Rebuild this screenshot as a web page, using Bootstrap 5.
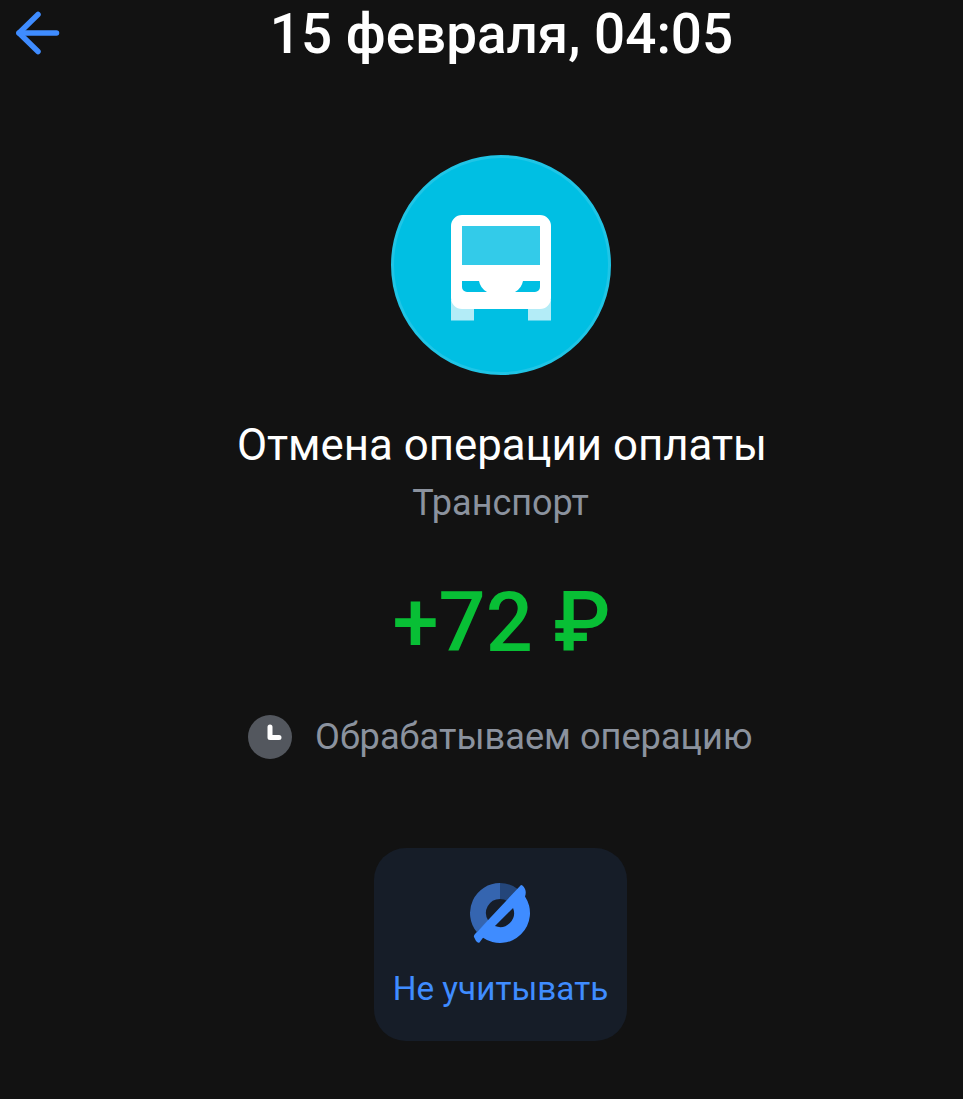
<!DOCTYPE html>
<html lang="ru">
<head>
    <meta charset="UTF-8">
    <meta name="viewport" content="width=device-width, initial-scale=1.0">
    <title>Операция</title>
    <link href="https://cdn.jsdelivr.net/npm/bootstrap@5.3.0/dist/css/bootstrap.min.css" rel="stylesheet">
    <style>
        html, body { height: 100%; }
        body { background: #121212; color: #fff; font-family: Roboto, "Liberation Sans", sans-serif; overflow: hidden; }
        .top-bar { display: grid; grid-template-columns: 62px 1fr 22px; height: 68px; align-items: center; }
        .top-title { font-size: 54.8px; font-weight: 500; line-height: 68px; margin: 0; }
        .back-arrow { display: block; margin-left: 16px; margin-top: -2px; }
        .op-body { padding-left: 38px; }
        .cat-circle { width: 220px; height: 220px; border-radius: 50%; background: #00bfe3; border: 3px solid #1fc5e6; margin-top: 87px; }
        .cat-bus { margin-top: 6px; }
        .op-name { font-size: 43.8px; line-height: 52px; margin-top: 44px; padding-left: 3px; }
        .op-cat { font-size: 36px; line-height: 44px; color: #8b929e; margin-top: 10px; }
        .op-sum { font-size: 83px; font-weight: 500; line-height: 100px; color: #08bf35; margin-top: 48px; padding-left: 2px; }
        .op-status { font-size: 36.2px; line-height: 44px; color: #8b929e; margin-top: 42px; gap: 22.5px; }
        .clock-dot { width: 44px; height: 44px; flex: none; }
        .skip-btn { width: 253px; height: 193px; border-radius: 32px; background: #161d28; margin-top: 89px; padding-top: 35px; color: #3f8cff; }
        .skip-icon { margin-left: -2px; }
        .skip-text { font-size: 33.3px; line-height: 40px; margin-top: 22px; }
    </style>
</head>
<body>

<header class="top-bar">
    <svg class="back-arrow" width="46" height="46" viewBox="0 0 46 46" fill="none" stroke="#3f8cff" stroke-width="5.500" stroke-linecap="round" stroke-linejoin="round">
        <path d="M3 23H40.500"/>
        <path d="M22 4.500L3 23L22 41.500"/>
    </svg>
    <h1 class="top-title text-center">15 февраля, 04:05</h1>
    <span></span>
</header>

<main class="op-body d-flex flex-column align-items-center">
    <div class="cat-circle d-flex align-items-center justify-content-center">
        <svg class="cat-bus" width="100" height="106" viewBox="0 0 100 106">
            <path d="M0 85H23V105.500H0ZM77 85H100V105.500H77Z" fill="#fff" fill-opacity=".7"/>
            <path fill="#fff" fill-rule="evenodd" d="M11 0H89A11 11 0 0 1 100 11V83A11 11 0 0 1 89 94H11A11 11 0 0 1 0 83V11A11 11 0 0 1 11 0ZM11 66V72A5 5 0 0 0 16 77H36A16 16 0 0 1 28 66ZM72 66A16 16 0 0 1 64 77H84A5 5 0 0 0 89 72V66Z"/>
            <rect x="11" y="11" width="78" height="39" fill="#33cbe9"/>
        </svg>
    </div>
    <div class="op-name">Отмена операции оплаты</div>
    <div class="op-cat">Транспорт</div>
    <div class="op-sum">+72 ₽</div>
    <div class="op-status d-flex align-items-center">
        <svg class="clock-dot" viewBox="0 0 44 44">
            <circle cx="22" cy="22" r="22" fill="#53575e"/>
            <path d="M22 12V22.500H31" fill="none" stroke="#fff" stroke-width="5" stroke-linecap="round" stroke-linejoin="round"/>
        </svg>
        <span>Обрабатываем операцию</span>
    </div>
    <div class="skip-btn d-flex flex-column align-items-center">
        <svg class="skip-icon" width="64" height="64" viewBox="0 0 64 64">
            <path fill="#3565b0" d="M32 0A30 30 0 0 0 8.800 49L20.300 37.700A14 14 0 0 1 32 16Z"/>
            <path fill="#24467a" d="M32 0A30 30 0 0 1 51.100 6.900L39.700 18.300A14 14 0 0 0 32 16Z"/>
            <path fill="#3f8cff" fill-rule="evenodd" d="M53 2Q55 2 57 6Q58.500 9.500 57 13.400A30 30 0 0 1 15 54.700L11.500 59.500Q10 60.500 8 58L6 54Q5.500 52.500 7 51ZM45.050 24.950L26.950 43.050A14 14 0 0 0 45.050 24.950Z"/>
        </svg>
        <div class="skip-text">Не учитывать</div>
    </div>
</main>

<script src="https://cdn.jsdelivr.net/npm/bootstrap@5.3.0/dist/js/bootstrap.bundle.min.js"></script>
</body>
</html>
